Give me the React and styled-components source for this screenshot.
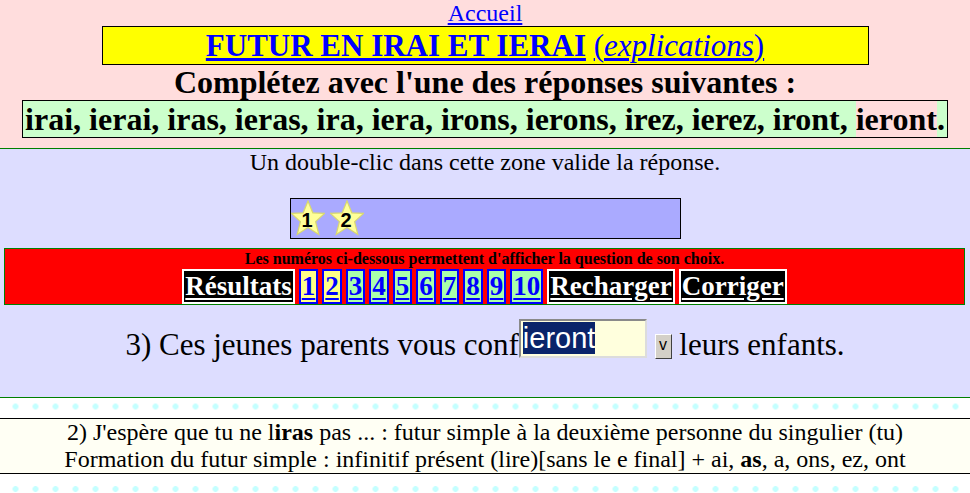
import React from 'react';
import styled, { createGlobalStyle } from 'styled-components';

const GlobalStyle = createGlobalStyle`
  body {
    margin: 0;
    background: #ffffff;
    color: #000000;
    font-family: "Liberation Serif", "Times New Roman", serif;
  }
`;

const Header = styled.div`
  background: #ffdddd;
  border-bottom: 1px solid #008000;
  text-align: center;
  padding-bottom: 10px;
`;

const HomeLink = styled.a`
  display: inline-block;
  font-size: 24px;
  line-height: 26px;
  color: #0000ff;
  text-decoration: underline;
`;

const TitleBox = styled.div`
  width: 767px;
  box-sizing: border-box;
  margin: 0 auto;
  border: 1px solid #000;
  background: #ffff00;
  font-size: 31px;
  line-height: 37px;
  a {
    color: #0000ff;
    text-decoration: underline;
  }
`;

const Heading = styled.div`
  font-size: 32px;
  font-weight: bold;
  line-height: 35px;
`;

const Choices = styled.div`
  display: inline-block;
  border: 1px solid #000;
  background: #ccffcc;
  font-size: 32px;
  font-weight: bold;
  line-height: 36px;
  padding: 0 2px;
`;

const Mark = styled.span`
  background: #ffdddd;
`;

const Zone = styled.div`
  background: #ddddff;
  border-bottom: 1px solid #008000;
  text-align: center;
  padding-bottom: 25px;
`;

const Hint = styled.div`
  font-size: 24px;
  line-height: 27px;
`;

const StarBar = styled.div`
  width: 391px;
  height: 41px;
  box-sizing: border-box;
  margin: 22px auto 0;
  border: 1px solid #000;
  background: #aaaaff;
  display: flex;
  align-items: center;
  gap: 5px;
`;

const Panel = styled.div`
  margin: 9px 5px 0 4px;
  border: 1px solid #008000;
  background: #ff0000;
`;

const PanelNote = styled.div`
  font-size: 16px;
  font-weight: bold;
  line-height: 20px;
`;

const NavRow = styled.div`
  display: flex;
  justify-content: center;
  gap: 4px;
`;

const ActionBtn = styled.a`
  border: 2px solid #ffffff;
  background: #000000;
  color: #ffffff;
  font-size: 27px;
  font-weight: bold;
  line-height: 31px;
  padding: 0 1px;
  text-decoration: underline;
  text-underline-offset: 3px;
`;

const NumBtn = styled.a`
  border: 2px solid #0000ff;
  background: ${p => (p.$done ? '#ffff88' : '#aaffaa')};
  color: #0000ff;
  font-size: 27px;
  font-weight: bold;
  line-height: 31px;
  padding: 0 1px;
  text-decoration: underline;
  text-underline-offset: 3px;
`;

const Question = styled.div`
  margin-top: 13px;
  font-size: 31px;
  line-height: 54px;
`;

const Field = styled.span`
  display: inline-block;
  width: 128px;
  height: 39px;
  box-sizing: border-box;
  vertical-align: 7px;
  border: 2px solid;
  border-color: #8a8a8a #dcdcdc #dcdcdc #8a8a8a;
  background: #ffffdd;
  text-align: left;
  padding: 1px 0 0 2px;
  font-family: "Liberation Sans", Arial, sans-serif;
  font-size: 29px;
  line-height: 33px;
`;

const Selected = styled.span`
  background: #0a246a;
  color: #ffffff;
`;

const DropBtn = styled.span`
  display: inline-block;
  width: 17px;
  height: 25px;
  box-sizing: border-box;
  vertical-align: 5px;
  border: 1px solid;
  border-color: #ffffff #404040 #404040 #ffffff;
  background: #d4d0c8;
  font-family: "Liberation Sans", Arial, sans-serif;
  font-size: 16px;
  line-height: 20px;
  text-align: center;
`;

const Dots = styled.div`
  height: 20px;
  background-image: radial-gradient(circle, #c4ffff 2.6px, transparent 3.2px);
  background-size: 20px 20px;
  background-repeat: repeat-x;
  background-position: 5.5px ${p => p.$y}px;
`;

const Explain = styled.div`
  border-top: 1px solid #000;
  border-bottom: 1px solid #000;
  background: #fffff4;
  text-align: center;
  font-size: 24px;
  line-height: 27px;
`;

const Star = ({ n }) => (
  <svg width="34" height="37" viewBox="0 0 34 37">
    <polygon
      points="17,1 21.8,12.8 33.6,13.4 24.6,21.6 27.8,34.5 17,27.4 6.2,34.5 9.4,21.6 0.4,13.4 12.2,12.8"
      fill="#ffff99"
      stroke="#d8d870"
      strokeWidth="1.2"
    />
    <text
      x="16"
      y="27"
      textAnchor="middle"
      fontFamily="Liberation Sans, Arial, sans-serif"
      fontWeight="bold"
      fontSize="20"
      fill="#000"
    >
      {n}
    </text>
  </svg>
);

const nums = [1, 2, 3, 4, 5, 6, 7, 8, 9, 10];

const App = () => {
  return (
    <>
      <GlobalStyle />
      <Header>
        <HomeLink href="#">Accueil</HomeLink>
        <TitleBox>
          <a href="#"><b>FUTUR EN IRAI ET IERAI</b></a>{' '}
          <a href="#">(<i>explications</i>)</a>
        </TitleBox>
        <Heading>Complétez avec l'une des réponses suivantes :</Heading>
        <Choices>
          irai, ierai, iras, ieras, ira, iera, irons, ierons, irez, ierez, iront, <Mark>ieront</Mark>.
        </Choices>
      </Header>
      <Zone>
        <Hint>Un double-clic dans cette zone valide la réponse.</Hint>
        <StarBar>
          <Star n="1" />
          <Star n="2" />
        </StarBar>
        <Panel>
          <PanelNote>Les numéros ci-dessous permettent d'afficher la question de son choix.</PanelNote>
          <NavRow>
            <ActionBtn href="#">Résultats</ActionBtn>
            {nums.map(n => (
              <NumBtn key={n} href="#" $done={n < 3}>{n}</NumBtn>
            ))}
            <ActionBtn href="#">Recharger</ActionBtn>
            <ActionBtn href="#">Corriger</ActionBtn>
          </NavRow>
        </Panel>
        <Question>
          3) Ces jeunes parents vous conf<Field><Selected>ieront</Selected></Field>{' '}
          <DropBtn>v</DropBtn> leurs enfants.
        </Question>
      </Zone>
      <Dots $y={-1.5} />
      <Explain>
        2) J'espère que tu ne l<b>iras</b> pas ... : futur simple à la deuxième personne du singulier (tu)
        <br />
        Formation du futur simple : infinitif présent (lire)[sans le e final] + ai, <b>as</b>, a, ons, ez, ont
      </Explain>
      <Dots $y={4.5} />
    </>
  );
};

export default App;
